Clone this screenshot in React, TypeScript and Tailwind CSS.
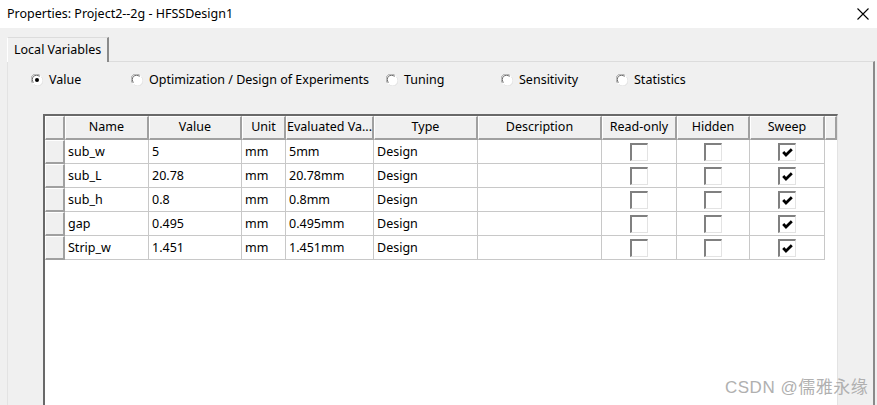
import React from "react";

const cols = [
	{ label: "Name", w: "w-[84px]" },
	{ label: "Value", w: "w-[93px]" },
	{ label: "Unit", w: "w-[44px]" },
	{ label: "Evaluated Va...", w: "w-[88px]" },
	{ label: "Type", w: "w-[104px]" },
	{ label: "Description", w: "w-[124px]" },
	{ label: "Read-only", w: "w-[75px]" },
	{ label: "Hidden", w: "w-[73px]" },
	{ label: "Sweep", w: "w-[75px]" },
];

const rows = [
	["sub_w", "5", "mm", "5mm"],
	["sub_L", "20.78", "mm", "20.78mm"],
	["sub_h", "0.8", "mm", "0.8mm"],
	["gap", "0.495", "mm", "0.495mm"],
	["Strip_w", "1.451", "mm", "1.451mm"],
];

const options = [
	{ label: "Value", w: "w-[100px]", on: true },
	{ label: "Optimization / Design of Experiments", w: "w-[255px]" },
	{ label: "Tuning", w: "w-[115px]" },
	{ label: "Sensitivity", w: "w-[115px]" },
	{ label: "Statistics", w: "w-[100px]" },
];

function Radio({ on }: { on?: boolean }) {
	return (
		<svg width="12" height="12" viewBox="0 0 12 12" className="shrink-0">
			<circle cx="6" cy="6" r="5.5" fill="#fff" />
			<path d="M1.5 9 A5 5 0 0 1 9 1.5" stroke="#a0a0a0" strokeWidth="1" fill="none" />
			<path d="M2.5 8.5 A4 4 0 0 1 8.5 2.5" stroke="#696969" strokeWidth="1" fill="none" />
			<path d="M10.5 3 A5 5 0 0 1 3 10.5" stroke="#e3e3e3" strokeWidth="1" fill="none" />
			{on && <circle cx="6" cy="6" r="2" fill="#000" />}
		</svg>
	);
}

function Check({ on }: { on?: boolean }) {
	return (
		<div className="w-[18px] h-[18px] bg-white border-l-2 border-t-2 border-l-[#808080] border-t-[#808080] border-r border-b border-r-[#e3e3e3] border-b-[#e3e3e3] flex items-center justify-center">
			{on && (
				<svg width="11" height="9" viewBox="0 0 11 9">
					<path d="M1.2 4 L4 7 L9.8 1.3" stroke="#000" strokeWidth="2.8" fill="none" strokeLinejoin="miter" />
				</svg>
			)}
		</div>
	);
}

function HeadCell({ children, w }: { children?: React.ReactNode; w: string }) {
	return (
		<div
			className={`${w} h-[24px] shrink-0 bg-[#f0f0f0] border-l border-t border-l-white border-t-white border-r-2 border-b-2 border-r-[#a0a0a0] border-b-[#a0a0a0] flex items-center justify-center overflow-hidden whitespace-nowrap`}
		>
			{children}
		</div>
	);
}

export default function App() {
	return (
		<div className="w-[877px] h-[405px] overflow-hidden bg-[#f0f0f0] text-[12.5px] text-black font-['Noto_Sans','Noto_Sans_CJK_SC',sans-serif] flex flex-col relative">
			{/* title bar */}
			<div className="h-[28px] bg-white flex items-center justify-between pl-[7px] pr-[8px] shrink-0">
				<span>Properties: Project2--2g - HFSSDesign1</span>
				<svg width="12" height="12" viewBox="0 0 12 12">
					<path d="M0.5 0.5 L11.5 11.5 M11.5 0.5 L0.5 11.5" stroke="#000" strokeWidth="1.1" />
				</svg>
			</div>

			{/* tab strip */}
			<div className="flex pl-[7px] pt-[9px] shrink-0">
				<div className="h-[25px] px-[6px] bg-[#f0f0f0] border-l border-t border-l-white border-t-[#dcdcdc] border-r-2 border-r-[#8a8a8a] flex items-center -mb-px relative z-10">
					Local Variables
				</div>
			</div>

			{/* panel */}
			<div className="flex-1 ml-[7px] mr-[2px] border-t border-l border-t-[#dcdcdc] border-l-[#e3e3e3] border-r-2 border-r-[#8a8a8a] flex flex-col">
				<div className="flex items-center h-[34px] pl-[23px] pt-[2px] shrink-0">
					{options.map((o) => (
						<div key={o.label} className={`${o.w} flex items-center gap-[6px] whitespace-nowrap`}>
							<Radio on={o.on} />
							<span>{o.label}</span>
						</div>
					))}
				</div>

				<div className="ml-[35px] mt-[18px] w-[795px] flex-1 bg-white border-l-2 border-t-2 border-l-[#696969] border-t-[#696969] border-r border-r-[#e3e3e3] flex flex-col">
					<div className="flex">
						<HeadCell w="w-[20px]" />
						{cols.map((c) => (
							<HeadCell key={c.label} w={c.w}>
								<span className="px-[1px]">{c.label}</span>
							</HeadCell>
						))}
						<HeadCell w="w-[12px]" />
					</div>
					{rows.map((r) => (
						<div key={r[0]} className="flex h-[24px]">
							<div className="w-[20px] shrink-0 bg-[#f0f0f0] border-l border-t border-l-white border-t-white border-r-2 border-b-2 border-r-[#a0a0a0] border-b-[#a0a0a0]" />
							{cols.map((c, i) => (
								<div
									key={c.label}
									className={`${c.w} shrink-0 border-r border-b border-[#c8c8c8] flex items-center whitespace-nowrap ${
										i >= 6 ? "justify-center" : "pl-[3px] pt-[1px]"
									}`}
								>
									{i < 4 ? r[i] : i === 4 ? "Design" : i === 5 ? "" : <Check on={i === 8} />}
								</div>
							))}
						</div>
					))}
				</div>
			</div>

			<div className="absolute left-[725px] top-[375px] text-[17px] text-[#b0b0b0] font-['Liberation_Sans','Noto_Sans_CJK_SC',sans-serif] tracking-[0.5px]">
				CSDN @儒雅永缘
			</div>
		</div>
	);
}
